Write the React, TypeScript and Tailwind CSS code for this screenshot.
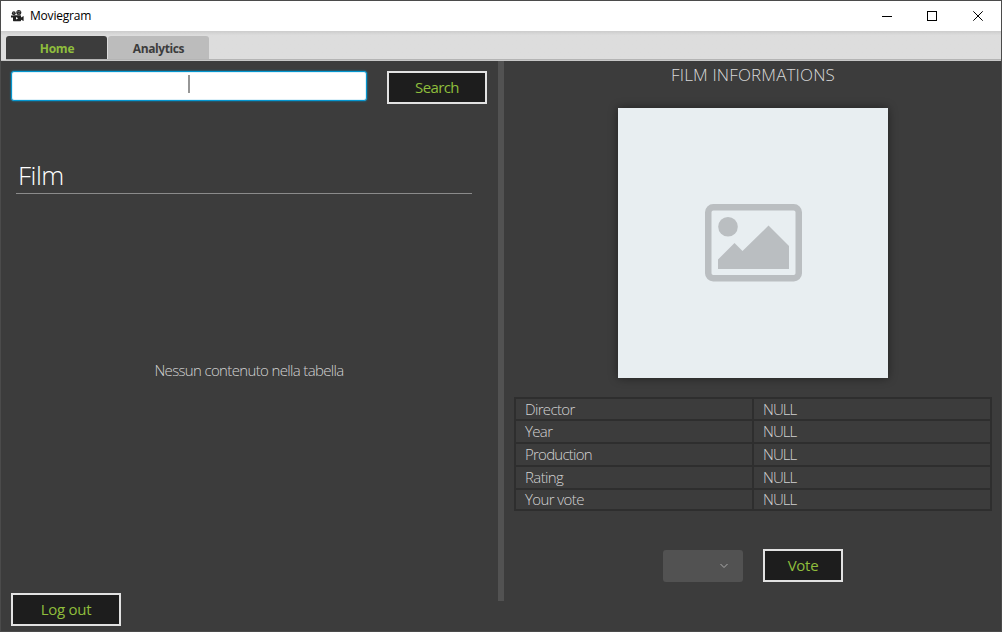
import type { ReactNode } from "react";

const details = [
  { label: "Director", tracking: "tracking-[-0.65px]" },
  { label: "Year", tracking: "tracking-[-0.65px]" },
  { label: "Production", tracking: "tracking-[-0.75px]" },
  { label: "Rating", tracking: "tracking-[-0.6px]" },
  { label: "Your vote", tracking: "tracking-[-0.6px]" },
];

function ActionButton({ className, children }: { className: string; children: ReactNode }) {
  return (
    <button
      className={`flex h-[33px] items-center justify-center border-2 border-[#e2e2e2] bg-[#1d1d1d] pb-[2px] text-[15px] leading-5 font-normal text-[#8fbe3c] ${className}`}
    >
      {children}
    </button>
  );
}

function CameraIcon() {
  return (
    <svg width="13" height="12" viewBox="0 0 13 12" className="text-[#222]" fill="currentColor">
      <circle cx="2.8" cy="3.2" r="1.9" />
      <circle cx="7.8" cy="2.5" r="2.5" />
      <rect x="2" y="5.2" width="8" height="6" rx="0.6" />
      <path d="M10 7.5 12.6 6v5L10 9.7Z" />
      <path d="M0 5.5h2v2H0z" />
      <path d="M5 7v2.6L7.2 8.3Z" fill="#fff" />
      <path d="M2.3 2.6h1v1h-1zM6.5 1.3h1v1h-1zM8.3 1.3h1v1h-1zM7.4 3.2h1v1h-1z" fill="#aaa" />
    </svg>
  );
}

function Placeholder() {
  return (
    <div className="mt-[22px] flex h-[270px] w-[270px] items-center justify-center bg-[#e8eef1] shadow-[0_0_9px_rgba(0,0,0,0.45)]">
      <svg width="97" height="78" viewBox="0 0 97 78" className="ml-px" fill="#babec1">
        <rect x="3.25" y="3.25" width="90.5" height="71" rx="5" fill="none" stroke="#babec1" strokeWidth="6.5" />
        <circle cx="23" cy="22.7" r="9.8" />
        <path d="M13 65V55.5L29.5 39 37.5 47 63.5 21.5 84 42V65Z" />
      </svg>
    </div>
  );
}

export default function App() {
  return (
    <div className="flex h-[632px] w-[1002px] flex-col overflow-hidden border border-[#4b4b4b] bg-[#3c3c3c] font-['Open_Sans',sans-serif]">
      <header className="flex h-[30px] shrink-0 items-center bg-white pl-[10px]">
        <CameraIcon />
        <span className="ml-[6px] text-[12px] tracking-[-0.2px] text-black">Moviegram</span>
        <div className="ml-auto flex pr-[17px]">
          <svg width="102" height="11" viewBox="0 0 102 11" fill="none" stroke="#000" shapeRendering="crispEdges">
            <path d="M0 5.5h10" />
            <path d="M45.5.5h9v9h-9z" />
            <path d="m91.3.3 9.4 9.4m0-9.4-9.4 9.4" shapeRendering="auto" />
          </svg>
        </div>
      </header>
      <nav className="flex h-[30px] shrink-0 items-end border-b border-[#c8c8c8] bg-linear-to-b from-[#cccccc] to-[#dddddd] to-15% pl-[5px] text-[12px] font-bold">
        <div className="flex h-full w-full items-end gap-px border-b border-[#b4b4b4]">
          <div className="flex h-[23px] w-[101px] items-center justify-center rounded-t-[3px] bg-[#3c3c3c] pt-[3px] pl-px tracking-[-0.25px] text-[#8fbe3c]">Home</div>
          <div className="flex h-[23px] w-[101px] items-center justify-center rounded-t-[3px] bg-[#bcbcbc] pt-[3px] tracking-[-0.4px] text-[#3c3c3c]">Analytics</div>
        </div>
      </nav>
      <main className="flex min-h-0 flex-1">
        <section className="flex w-[497px] flex-col">
          <div className="flex items-start pt-[10px] pl-[10px]">
            <div className="flex h-[30px] w-[356px] justify-center rounded-[3px] border border-[#0496cf] bg-white pt-[3px] shadow-[inset_0_0_0_1px_#def1f9,0_0_2px_#0496cf]">
              <div className="h-[18px] w-0.5 bg-[#969696]" />
            </div>
            <ActionButton className="ml-5 w-[100px] tracking-[-0.6px]">Search</ActionButton>
          </div>
          <div className="mt-[56px] ml-[15px] flex h-[34px] w-[456px] items-center border-b border-[#8b8b8b] pb-[2px] pl-0.5 text-[26px] font-light tracking-[-0.5px] text-white">Film</div>
          <div className="mt-[166px] ml-[15px] flex h-5 w-[466px] items-center justify-center text-[15px] font-light tracking-[-0.65px] text-[#d2d2d2]">Nessun contenuto nella tabella</div>
          <ActionButton className="mt-auto mb-[5px] ml-[10px] w-[110px] tracking-[-0.3px]">Log out</ActionButton>
        </section>
        <div className="h-[540px] w-[6px] bg-[#525252]" />
        <section className="flex flex-1 flex-col items-center">
          <h1 className="mt-[3px] h-[22px] pl-px text-[17px] leading-[22px] font-light tracking-[0.15px] text-[#d8d8d8]">FILM INFORMATIONS</h1>
          <Placeholder />
          <div className="mt-[19px] grid w-[478px] grid-cols-2 grid-rows-[20px_21px_21px_21px_19px] gap-0.5 bg-[#2e2e2e] p-0.5 text-[15px] font-light text-[#d2d2d2]">
            {details.flatMap(({ label, tracking }) => [
              <div key={label} className={`flex min-h-0 items-center bg-[#3c3c3c] pl-[9.5px] leading-[17px] ${tracking}`}>{label}</div>,
              <div key={`${label}-value`} className="flex min-h-0 items-center bg-[#3c3c3c] pl-[9.5px] leading-[17px] tracking-[-0.9px]">NULL</div>,
            ])}
          </div>
          <div className="mt-[38px] flex items-center gap-5">
            <div className="flex h-8 w-20 items-center justify-end rounded-[3px] bg-[#525252] pr-[15px]">
              <svg width="8" height="6" viewBox="0 0 8 6" fill="none" stroke="#aaa"><path d="m.5 1 3.5 3.5L7.5 1" /></svg>
            </div>
            <ActionButton className="w-20 pl-px tracking-[-0.3px]">Vote</ActionButton>
          </div>
        </section>
      </main>
    </div>
  );
}
